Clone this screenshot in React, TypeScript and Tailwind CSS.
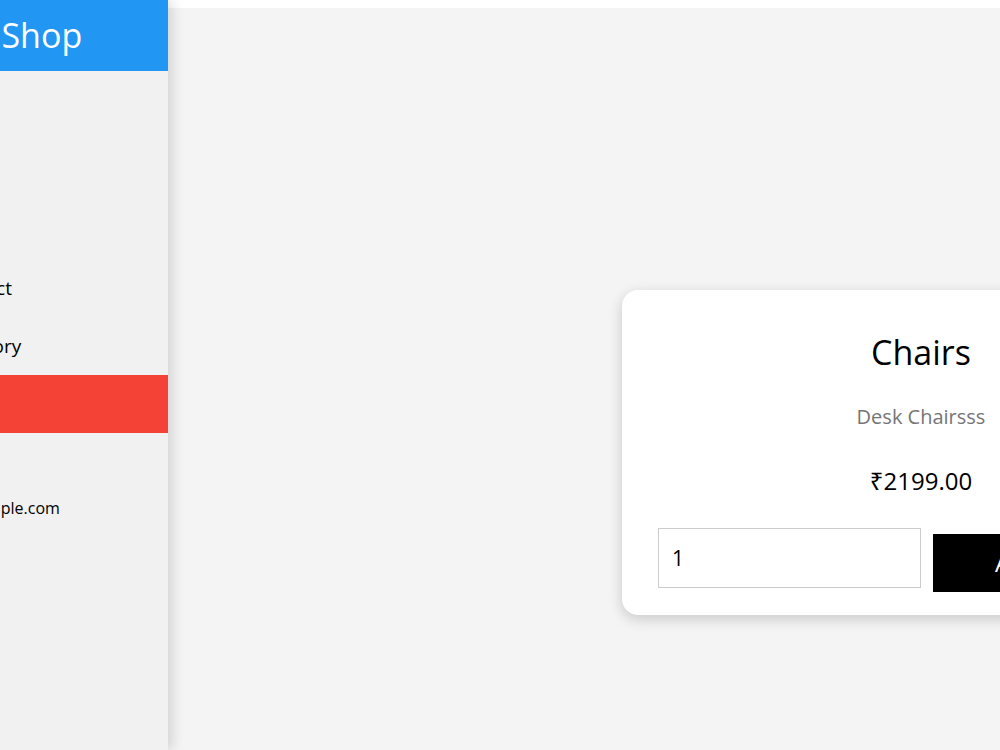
import { useState } from "react";

const menu = ["Home", "Orders", "Users", "Add Product", "Add Category"];

export default function App() {
  const [qty, setQty] = useState("1");

  return (
    <div
      className="flex h-[750px] w-[1000px] overflow-hidden bg-[#f4f4f4] text-black"
      style={{ fontFamily: '"Open Sans", "Noto Sans", sans-serif' }}
    >
      <aside className="relative z-10 w-[168px] shrink-0 overflow-hidden bg-[#f1f1f1] shadow-[4px_0_12px_rgba(0,0,0,0.14)]">
        <div className="ml-[-114px] w-[282px]">
          <div className="flex h-[71px] items-center bg-[#2196f3] pl-[59px] text-[34px] text-white">My Shop</div>
          <nav className="pt-[14px]">
            {menu.map((item) => (
              <a key={item} className="flex h-[58px] items-center px-4 text-[19px]">
                {item}
              </a>
            ))}
            <a className="flex h-[58px] items-center bg-[#f44336] px-4 text-[19px] text-white">Logout</a>
          </nav>
          <div className="pl-3 pt-[63px] text-[16px]">admin@example.com</div>
        </div>
      </aside>

      <main className="flex-1">
        <div className="h-[8px] bg-white" />
        <div className="pl-[454px] pt-[282px]">
          <div className="w-[598px] rounded-2xl bg-white px-[36px] pt-[35px] pb-[23px] text-center shadow-[0_4px_14px_rgba(0,0,0,0.18)]">
            <h2 className="text-[34px] leading-[54px]">Chairs</h2>
            <p className="mt-[23px] text-[20px] leading-[30px] text-[#757575]">Desk Chairsss</p>
            <p className="mt-[31px] text-[24px] leading-[36px]">₹2199.00</p>
            <div className="mt-[29px] flex items-start gap-3">
              <input
                type="number"
                value={qty}
                onChange={(e) => setQty(e.target.value)}
                className="h-[60px] w-[263px] border border-[#ccc] px-[13px] text-[21px] outline-none"
              />
              <button className="mt-[6px] h-[58px] flex-1 bg-black text-[24px] text-white">Add to Cart</button>
            </div>
          </div>
        </div>
      </main>
    </div>
  );
}
